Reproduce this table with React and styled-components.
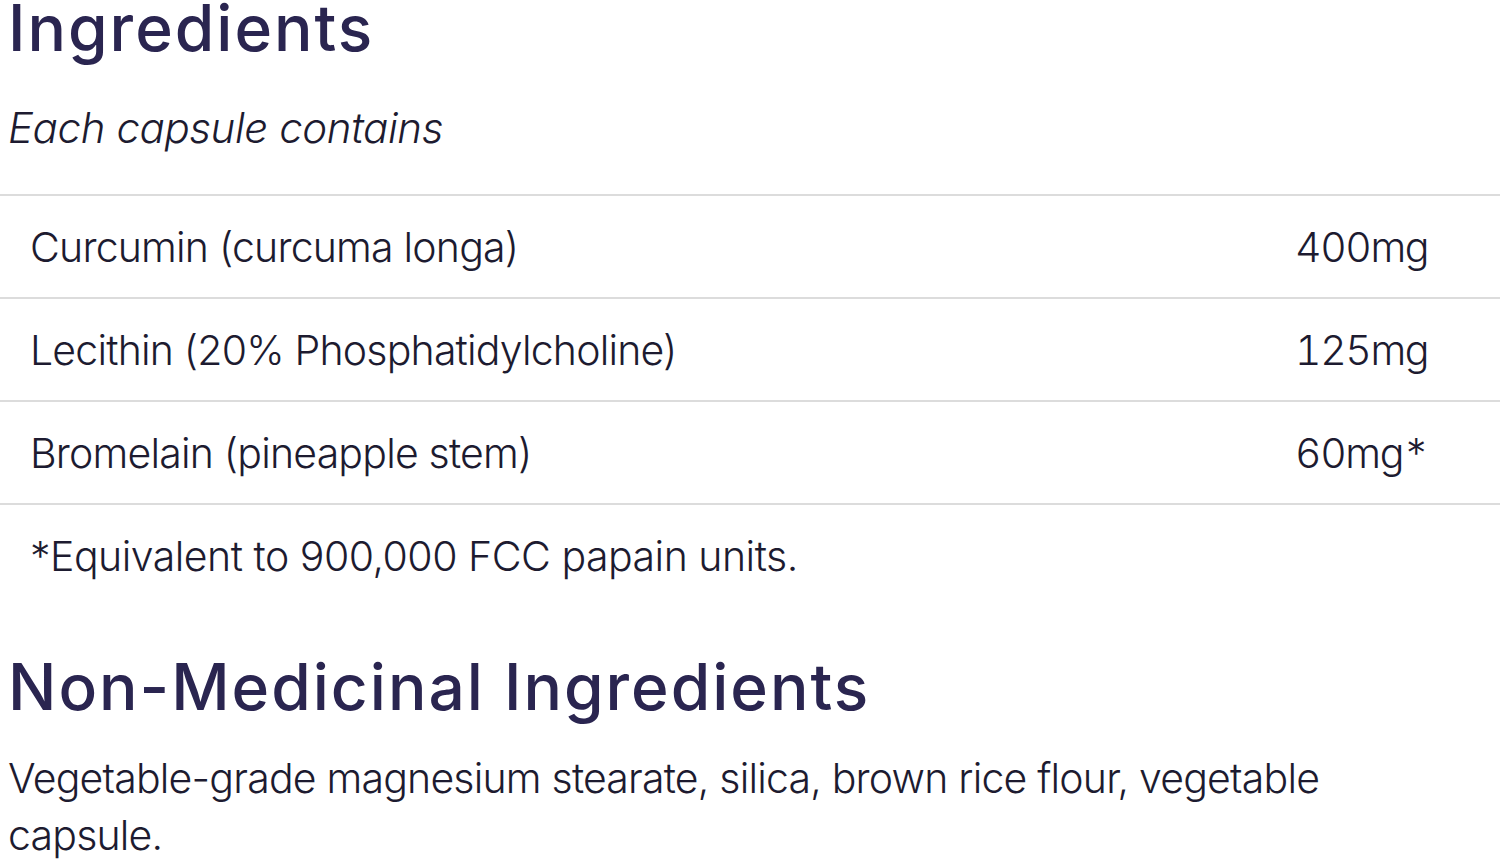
import React from 'react';
import styled, { createGlobalStyle } from 'styled-components';

const GlobalStyle = createGlobalStyle`
    html, body {
        margin: 0;
        padding: 0;
        background: #ffffff;
    }
    body {
        font-family: Inter, "Liberation Sans", sans-serif;
        color: #1d1b30;
        overflow: hidden;
    }
`;

const Page = styled.div`
    width: 1500px;
    height: 860px;
    overflow: hidden;
    box-sizing: border-box;
`;

const Heading = styled.h2`
    margin: 0;
    padding-left: 8px;
    font-size: 64px;
    font-weight: 500;
    line-height: 1;
    letter-spacing: ${(p) => p.spacing || '1px'};
    color: #2a2550;
    margin-top: ${(p) => p.top || '0px'};
`;

const Subtitle = styled.p`
    margin: 0;
    padding-left: 8px;
    height: 134px;
    display: flex;
    align-items: center;
    font-size: 42px;
    font-weight: 300;
    font-style: italic;
    letter-spacing: -0.4px;
    color: #1d1b30;
`;

const Table = styled.div`
    display: flex;
    flex-direction: column;
`;

const Row = styled.div`
    display: grid;
    grid-template-columns: 1fr 205px;
    align-items: center;
    height: 101px;
    padding-left: 30px;
    border-top: 2px solid #dcdcdc;
    font-size: 41px;
    font-weight: 300;
    letter-spacing: -0.8px;
`;

const Amount = styled.span`
    font-variant-numeric: tabular-nums;
    letter-spacing: -1.4px;
`;

const Note = styled.div`
    padding: 26px 0 0 30px;
    height: 80px;
    border-top: 2px solid #dcdcdc;
    font-size: 41px;
    font-weight: 300;
    letter-spacing: -0.5px;
`;

const Paragraph = styled.p`
    margin: 31px 0 0;
    padding-left: 8px;
    max-width: 1340px;
    font-size: 41px;
    font-weight: 300;
    line-height: 57px;
    letter-spacing: -0.8px;
`;

const rows = [
    { name: 'Curcumin (curcuma longa)', amount: '400mg' },
    { name: 'Lecithin (20% Phosphatidylcholine)', amount: '125mg' },
    { name: 'Bromelain (pineapple stem)', amount: '60mg*' },
];

const App = () => {
    return (
        <Page>
            <GlobalStyle />
            <Heading top="-4px" spacing="2px">Ingredients</Heading>
            <Subtitle>Each capsule contains</Subtitle>
            <Table>
                {rows.map((r) => (
                    <Row key={r.name}>
                        <span>{r.name}</span>
                        <Amount>{r.amount}</Amount>
                    </Row>
                ))}
                <Note>*Equivalent to 900,000 FCC papain units.</Note>
            </Table>
            <Heading top="44px" spacing="2px">Non-Medicinal Ingredients</Heading>
            <Paragraph>
                Vegetable-grade magnesium stearate, silica, brown rice flour, vegetable capsule.
            </Paragraph>
        </Page>
    );
};

export default App;
